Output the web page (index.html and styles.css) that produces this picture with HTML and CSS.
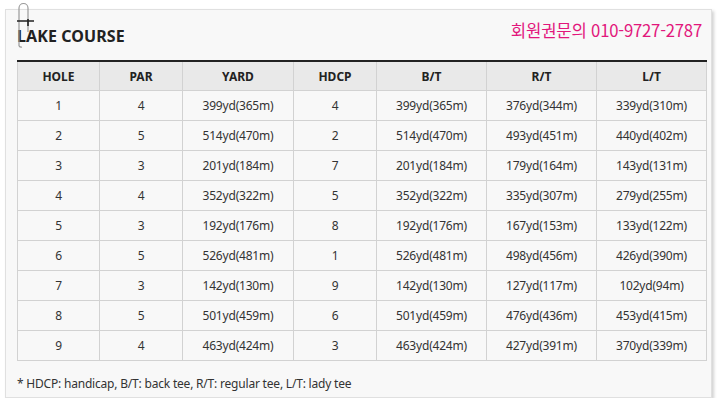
FILE: index.html
```html
<!DOCTYPE html>
<html lang="ko">
<head>
<meta charset="utf-8">
<link rel="stylesheet" href="styles.css">
</head>
<body>
<div class="page">
  <svg class="clip" width="22" height="48" viewBox="0 0 22 48">
    <path d="M4 44 V6 a4.5 4.5 0 0 1 9 0 V30" fill="none" stroke="#9a9a9a" stroke-width="1.2"/>
    <path d="M4 44 a3 3 0 0 0 3 1" fill="none" stroke="#9a9a9a" stroke-width="1.2"/>
    <path d="M2 19 H19 M13 17 V24" fill="none" stroke="#222" stroke-width="1.6"/>
  </svg>
  <div class="head">
    <h1 class="title">LAKE COURSE</h1>
    <div class="phone">회원권문의 010-9727-2787</div>
  </div>
  <table class="course">
    <colgroup>
      <col class="c82"><col class="c83"><col class="c111"><col class="c83"><col class="c110"><col class="c110"><col class="c110">
    </colgroup>
    <thead>
      <tr><th>HOLE</th><th>PAR</th><th>YARD</th><th>HDCP</th><th>B/T</th><th>R/T</th><th>L/T</th></tr>
    </thead>
    <tbody>
      <tr><td>1</td><td>4</td><td>399yd(365m)</td><td>4</td><td>399yd(365m)</td><td>376yd(344m)</td><td>339yd(310m)</td></tr>
      <tr><td>2</td><td>5</td><td>514yd(470m)</td><td>2</td><td>514yd(470m)</td><td>493yd(451m)</td><td>440yd(402m)</td></tr>
      <tr><td>3</td><td>3</td><td>201yd(184m)</td><td>7</td><td>201yd(184m)</td><td>179yd(164m)</td><td>143yd(131m)</td></tr>
      <tr><td>4</td><td>4</td><td>352yd(322m)</td><td>5</td><td>352yd(322m)</td><td>335yd(307m)</td><td>279yd(255m)</td></tr>
      <tr><td>5</td><td>3</td><td>192yd(176m)</td><td>8</td><td>192yd(176m)</td><td>167yd(153m)</td><td>133yd(122m)</td></tr>
      <tr><td>6</td><td>5</td><td>526yd(481m)</td><td>1</td><td>526yd(481m)</td><td>498yd(456m)</td><td>426yd(390m)</td></tr>
      <tr><td>7</td><td>3</td><td>142yd(130m)</td><td>9</td><td>142yd(130m)</td><td>127yd(117m)</td><td>102yd(94m)</td></tr>
      <tr><td>8</td><td>5</td><td>501yd(459m)</td><td>6</td><td>501yd(459m)</td><td>476yd(436m)</td><td>453yd(415m)</td></tr>
      <tr><td>9</td><td>4</td><td>463yd(424m)</td><td>3</td><td>463yd(424m)</td><td>427yd(391m)</td><td>370yd(339m)</td></tr>
    </tbody>
  </table>
  <p class="note">* HDCP: handicap, B/T: back tee, R/T: regular tee, L/T: lady tee</p>
</div>
</body>
</html>
```
FILE: styles.css
```css
html, body {
  margin: 0;
  padding: 0;
  background: #ffffff;
}
body {
  font-family: "Noto Sans", "Noto Sans CJK KR", sans-serif;
  color: #333;
}
.page {
  position: relative;
  margin: 9px 0 0 5px;
  width: 707px;
  height: 389px;
  box-sizing: border-box;
  border: 1px solid #e0e0e0;
  background: #f8f8f8;
  box-shadow: 2px 2px 3px rgba(0, 0, 0, 0.18);
  padding: 0 5px 0 11px;
}
.clip {
  position: absolute;
  left: 9px;
  top: -8px;
}
.head {
  display: flex;
  justify-content: space-between;
  align-items: flex-end;
  height: 36px;
  padding-right: 4px;
}
.title {
  margin: 0;
  font-size: 16px;
  font-weight: 700;
  color: #222;
  line-height: 20px;
  letter-spacing: 0.1px;
}
.phone {
  font-family: "Noto Sans CJK KR", sans-serif;
  color: #e2177c;
  font-size: 16.7px;
  line-height: 20px;
  align-self: flex-start;
  margin-top: 10px;
  letter-spacing: -0.2px;
}
.course {
  margin-top: 14px;
  width: 689px;
  border-collapse: collapse;
  table-layout: fixed;
  border-top: 2px solid #222;
  font-size: 12px;
  letter-spacing: -0.2px;
}
.c82 { width: 82px; }
.c83 { width: 83px; }
.c111 { width: 111px; }
.c110 { width: 110px; }
.course th {
  background: #e9e9e9;
  font-weight: 700;
  color: #222;
  height: 28px;
  padding: 0;
  border: 1px solid #d2d2d2;
  border-top: 0;
  letter-spacing: 0;
}
.course td {
  background: #f8f8f8;
  height: 29px;
  padding: 0;
  text-align: center;
  border: 1px solid #d2d2d2;
  color: #333;
}
.note {
  margin: 14px 0 0;
  font-size: 12px;
  letter-spacing: -0.2px;
  color: #333;
}
```
